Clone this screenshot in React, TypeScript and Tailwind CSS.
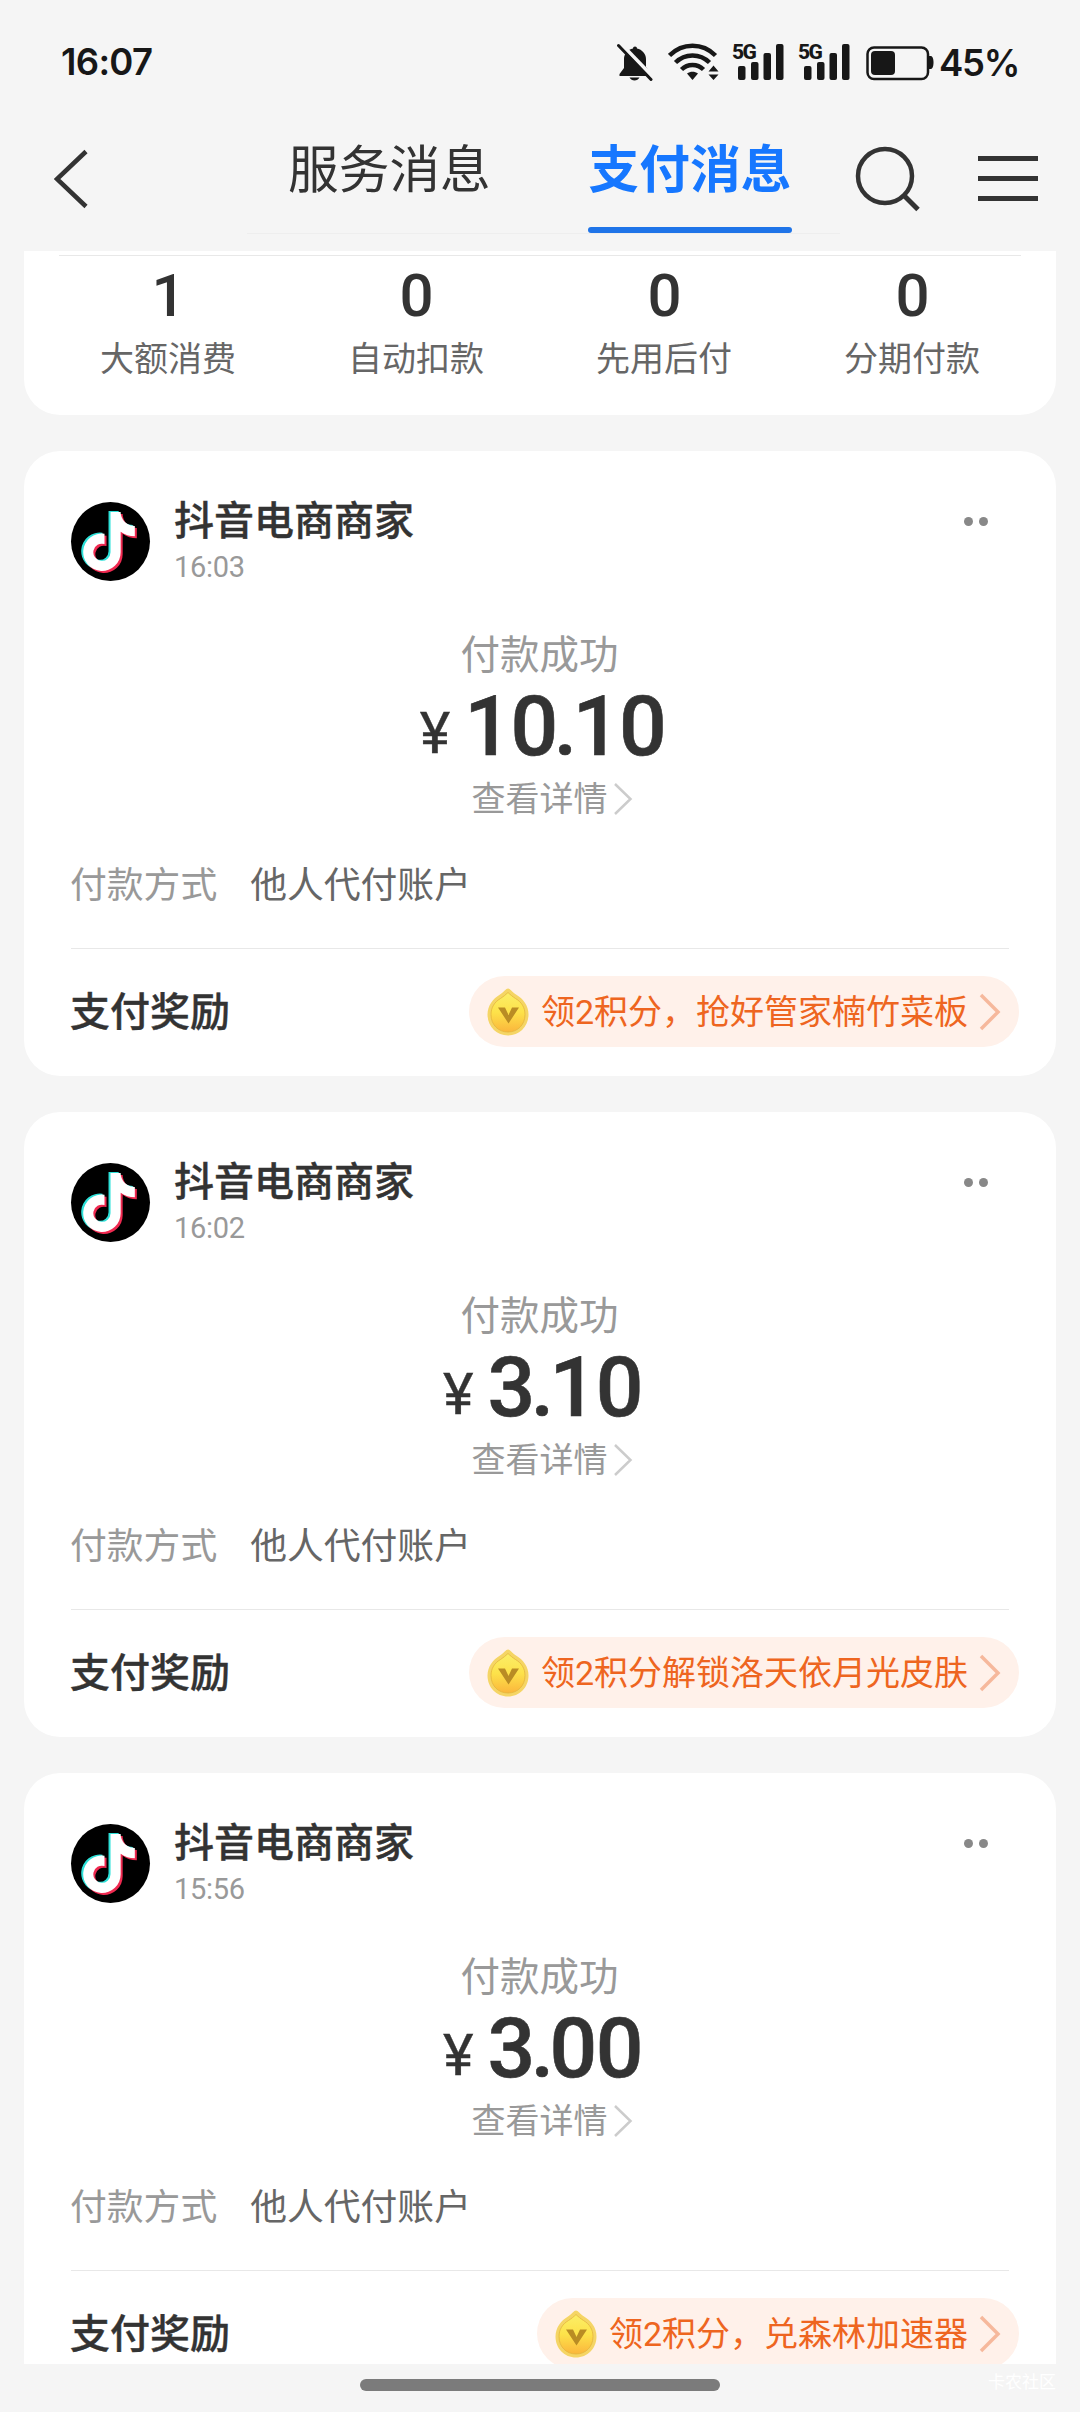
import { FaTiktok } from 'react-icons/fa6';

interface Payment {
  id: number;
  merchant: string;
  time: string;
  amount: string;
  method: string;
  reward: string;
}

const stats = [
  { label: '大额消费', count: 1 },
  { label: '自动扣款', count: 0 },
  { label: '先用后付', count: 0 },
  { label: '分期付款', count: 0 },
];

const payments: Payment[] = [
  { id: 1, merchant: '抖音电商商家', time: '16:03', amount: '10.10', method: '他人代付账户', reward: '领2积分，抢好管家楠竹菜板' },
  { id: 2, merchant: '抖音电商商家', time: '16:02', amount: '3.10', method: '他人代付账户', reward: '领2积分解锁洛天依月光皮肤' },
  { id: 3, merchant: '抖音电商商家', time: '15:56', amount: '3.00', method: '他人代付账户', reward: '领2积分，兑森林加速器' },
];

function Signal() {
  return (
    <div className="relative h-[38px] w-[52px] shrink-0">
      <span className="absolute left-0 top-0 font-[Roboto] text-[21px] leading-[18px] font-extrabold tracking-[-1.500px]">5G</span>
      <svg className="absolute left-0 top-0" width="52" height="38" fill="#171717">
        <rect x="6" y="23" width="7.5" height="14" rx="2" />
        <rect x="19" y="19" width="7.5" height="18" rx="2" />
        <rect x="31.5" y="10" width="7.5" height="27" rx="2" />
        <rect x="44" y="1" width="7.5" height="36" rx="2" />
      </svg>
    </div>
  );
}

function StatusBar() {
  return (
    <div className="flex h-[123px] items-start pl-[61px] pt-[43px] text-[#171717]">
      <span className="mt-px w-[556px] font-[Inter] text-[36.500px] leading-[36px] font-semibold tracking-[-0.700px]">16:07</span>
      <svg width="36" height="38" viewBox="0 0 36 38" className="shrink-0">
        <path d="M18 3.500c1.200 0 2 .8 2 2 5 1 9 5.300 9 10.500v8l5 7v2H2.500v-2l4.500-6v-9c0-5.200 4-9.500 9-10.500 0-1.200.8-2 2-2z" fill="#171717" />
        <path d="M12.500 34.500h10c-1 2-3 3-5 3s-4-1-5-3z" fill="#171717" />
        <path d="M4 1L36 34" stroke="#f5f5f5" strokeWidth="4" />
        <path d="M1.500 2.500L34 36.500" stroke="#171717" strokeWidth="3" strokeLinecap="round" />
      </svg>
      <svg width="51" height="38" viewBox="0 0 51 38" className="ml-[15px] shrink-0" fill="none" stroke="#171717" strokeWidth="4.500">
        <path d="M1.500 12.500C14.500-.5 34.500-.5 47.500 12.500M7.500 19.500c9.500-9.500 24.500-9.500 34 0M13.500 26.500c6-6 16-6 22 0" />
        <path d="M19 30.500c3.500-2.500 7.500-2.500 11 0L24.500 37z" fill="#171717" stroke="none" />
        <path d="M40.500 28.500h10L45.500 22.500zM40.500 31.500h10L45.500 37z" fill="#171717" stroke="none" />
      </svg>
      <div className="ml-[13px] flex gap-[14px]">
        <Signal />
        <Signal />
      </div>
      <svg width="68" height="38" viewBox="0 0 68 38" className="ml-[16px] shrink-0">
        <rect x="1.500" y="4.500" width="60.500" height="31.500" rx="6.500" fill="none" stroke="#171717" strokeWidth="2.500" />
        <rect x="5" y="8" width="24" height="24" rx="4" fill="#171717" />
        <path d="M63 13h1.500c2 0 3 2.500 3 6.500s-1 6.500-3 6.500H63z" fill="#171717" />
      </svg>
      <span className="ml-[5px] mt-[2px] font-[Inter] text-[36.500px] leading-[36px] font-semibold tracking-[-1.200px]">45%</span>
    </div>
  );
}

function NavBar() {
  return (
    <div className="flex h-[128px] items-start">
      <svg width="34" height="60" viewBox="0 0 34 60" className="ml-[54px] mr-px mt-[26px] shrink-0" fill="none" stroke="#333" strokeWidth="4.500">
        <path d="M32 2.500L3 30l29 27.500" />
      </svg>
      <div className="ml-[158px] flex h-[111px] w-[593px] shrink-0 justify-between border-b border-[#eee] pl-[41px] pr-[48px] pt-[23px] text-[50.700px] leading-[50px]">
        <span className="text-[#333]">服务消息</span>
        <div className="flex h-[87px] w-[204px] flex-col items-center justify-between">
          <span className="font-bold text-[#1677ff]">支付消息</span>
          <div className="h-[6px] w-full rounded-full bg-[#1f74e8]" />
        </div>
      </div>
      <svg width="66" height="68" viewBox="0 0 66 68" className="ml-[15px] mt-[22px] shrink-0" fill="none" stroke="#333" strokeWidth="4.500">
        <circle cx="30" cy="31" r="27" />
        <path d="M49 50.500L63 64.500" strokeWidth="5" />
      </svg>
      <div className="ml-[57px] mt-[33px] flex w-[60px] shrink-0 flex-col gap-[15.500px]">
        <div className="h-[4.500px] bg-[#333]" />
        <div className="h-[4.500px] bg-[#333]" />
        <div className="h-[4.500px] bg-[#333]" />
      </div>
    </div>
  );
}

function MerchantLogo() {
  return (
    <div className="relative mt-[2px] size-[79px] shrink-0 rounded-full bg-black">
      <FaTiktok className="absolute left-[10px] top-[9px] h-[59px] w-[52px] text-[#2de0d8]" />
      <FaTiktok className="absolute left-[14px] top-[12px] h-[59px] w-[52px] text-[#ef2950]" />
      <FaTiktok className="absolute left-[12px] top-[10px] h-[59px] w-[52px] text-white" />
    </div>
  );
}

function Coin() {
  return (
    <svg width="42" height="48" viewBox="0 0 42 48" className="shrink-0">
      <defs>
        <linearGradient id="coin" x1="0" y1="0" x2="0" y2="1">
          <stop offset="0" stopColor="#fbee68" />
          <stop offset="0.500" stopColor="#fde24a" />
          <stop offset="1" stopColor="#fbb63c" />
        </linearGradient>
      </defs>
      <path d="M21 0.500c2 0 4 3.500 8 6 7 4 12.500 11 12.500 20C41.500 38.500 32.500 47.500 21 47.500S.5 38.500.5 26.500c0-9 5.500-16 12.500-20 4-2.500 6-6 8-6z" fill="#f5d565" />
      <path d="M21 4.500c2 2 4.500 4 7.500 6C34.500 14 38 19.500 38 26.500 38 37 30.500 44 21 44S4 37 4 26.500c0-7 3.500-12.500 9.500-16 3-2 5.500-4 7.500-6z" fill="url(#coin)" stroke="#e3b53c" strokeWidth="0.800" />
      <path d="M11 19.500h7l3.500 7.500 3.500-7.500h7L21.500 35.500z" fill="#b98c24" />
    </svg>
  );
}

function PaymentCard({ payment }: { payment: Payment }) {
  const [yuan, cents] = payment.amount.split('.');

  return (
    <div className="flex h-[625px] shrink-0 flex-col rounded-[36px] bg-white px-[47px] pt-[49px]">
      <div className="flex h-[82px]">
        <MerchantLogo />
        <div className="ml-[24px] flex-1 pt-[2px]">
          <div className="text-[40px] leading-[40px] font-medium text-[#333] [-webkit-text-stroke:0.4px_#333]">{payment.merchant}</div>
          <div className="mt-[10px] font-[Roboto] text-[29px] leading-[30px] tracking-[-0.300px] text-[#999]">{payment.time}</div>
        </div>
        <div className="mr-[21px] mt-[17px] flex gap-[6px]">
          <div className="size-[9px] rounded-full bg-[#888]" />
          <div className="size-[9px] rounded-full bg-[#888]" />
        </div>
      </div>
      <div className="mt-[54px] pr-px text-center text-[39.500px] leading-[40px] text-[#999]">付款成功</div>
      <div className="mt-[21px] flex h-[60px] justify-center pl-[5px] font-[Roboto] leading-[60px] font-medium text-[#333]">
        <span className="mt-[6px] mr-[14px] text-[58px] font-normal [-webkit-text-stroke:0.4px_#333]">¥</span>
        <span className="text-[84px] tracking-[-1.500px] [-webkit-text-stroke:0.6px_#333]">
          {yuan}<span className="-ml-[3px] -mr-[3px]">.</span>{cents}
        </span>
      </div>
      <div className="mt-[25px] flex h-[34px] items-center justify-center pl-[24px] text-[34px] leading-[34px] text-[#999]">
        <span>查看详情</span>
        <svg width="19" height="32" viewBox="0 0 19 32" className="ml-[6px]" fill="none" stroke="#ccc" strokeWidth="2.500">
          <path d="M1 1l15.500 15L1 31" />
        </svg>
      </div>
      <div className="-ml-px mt-[51px] flex gap-[33px] text-[36.800px] leading-[37px]">
        <span className="text-[#999]">付款方式</span>
        <span className="text-[#666]">{payment.method}</span>
      </div>
      <div className="mt-[44px] h-px shrink-0 bg-[#e8e8e8]" />
      <div className="mt-[27px] -mr-[10px] flex h-[71px] shrink-0 items-center justify-between">
        <span className="-ml-px pt-[2px] text-[40px] leading-[40px] font-medium text-[#333] [-webkit-text-stroke:0.4px_#333]">支付奖励</span>
        <div className="flex h-[71px] items-center rounded-full bg-[#fff1ea] pl-[18px] pr-[18px]">
          <Coin />
          <span className="ml-[12px] pt-px text-[34px] leading-[34px] text-[#ee6520]">{payment.reward}</span>
          <svg width="22" height="38" viewBox="0 0 22 38" className="ml-[11px]" fill="none" stroke="#f6b89c" strokeWidth="3.500">
            <path d="M2 2l17 17L2 36" />
          </svg>
        </div>
      </div>
    </div>
  );
}

export default function App() {
  return (
    <div className="flex h-[2412px] w-[1080px] flex-col overflow-hidden bg-[#f5f5f5] font-['Roboto','Noto_Sans_CJK_SC',sans-serif] whitespace-nowrap">
      <StatusBar />
      <NavBar />
      <div className="flex h-[2113px] shrink-0 flex-col gap-[36px] overflow-hidden px-[24px]">
        <div className="h-[164px] shrink-0 rounded-b-[36px] bg-white pt-[4px]">
          <div className="mx-[35px] h-px bg-[#e8e8e8]" />
          <div className="grid grid-cols-4 px-[20px] pt-[17px] text-center">
            {stats.map(stat => (
              <div key={stat.label}>
                <div className="pl-px font-[Roboto] text-[60px] leading-[46px] font-medium text-[#333]">{stat.count}</div>
                <div className="mt-[23px] text-[34px] leading-[34px] text-[#666]">{stat.label}</div>
              </div>
            ))}
          </div>
        </div>
        {payments.map(payment => (
          <PaymentCard key={payment.id} payment={payment} />
        ))}
      </div>
      <div className="flex h-[48px] shrink-0 items-start justify-end pr-[24px]">
        <div className="mt-[15px] mr-[268px] h-[12px] w-[360px] rounded-full bg-[#7b7b7b]" />
        <span className="mt-[9px] text-[17px] leading-[18px] text-white">卡农社区</span>
      </div>
    </div>
  );
}
